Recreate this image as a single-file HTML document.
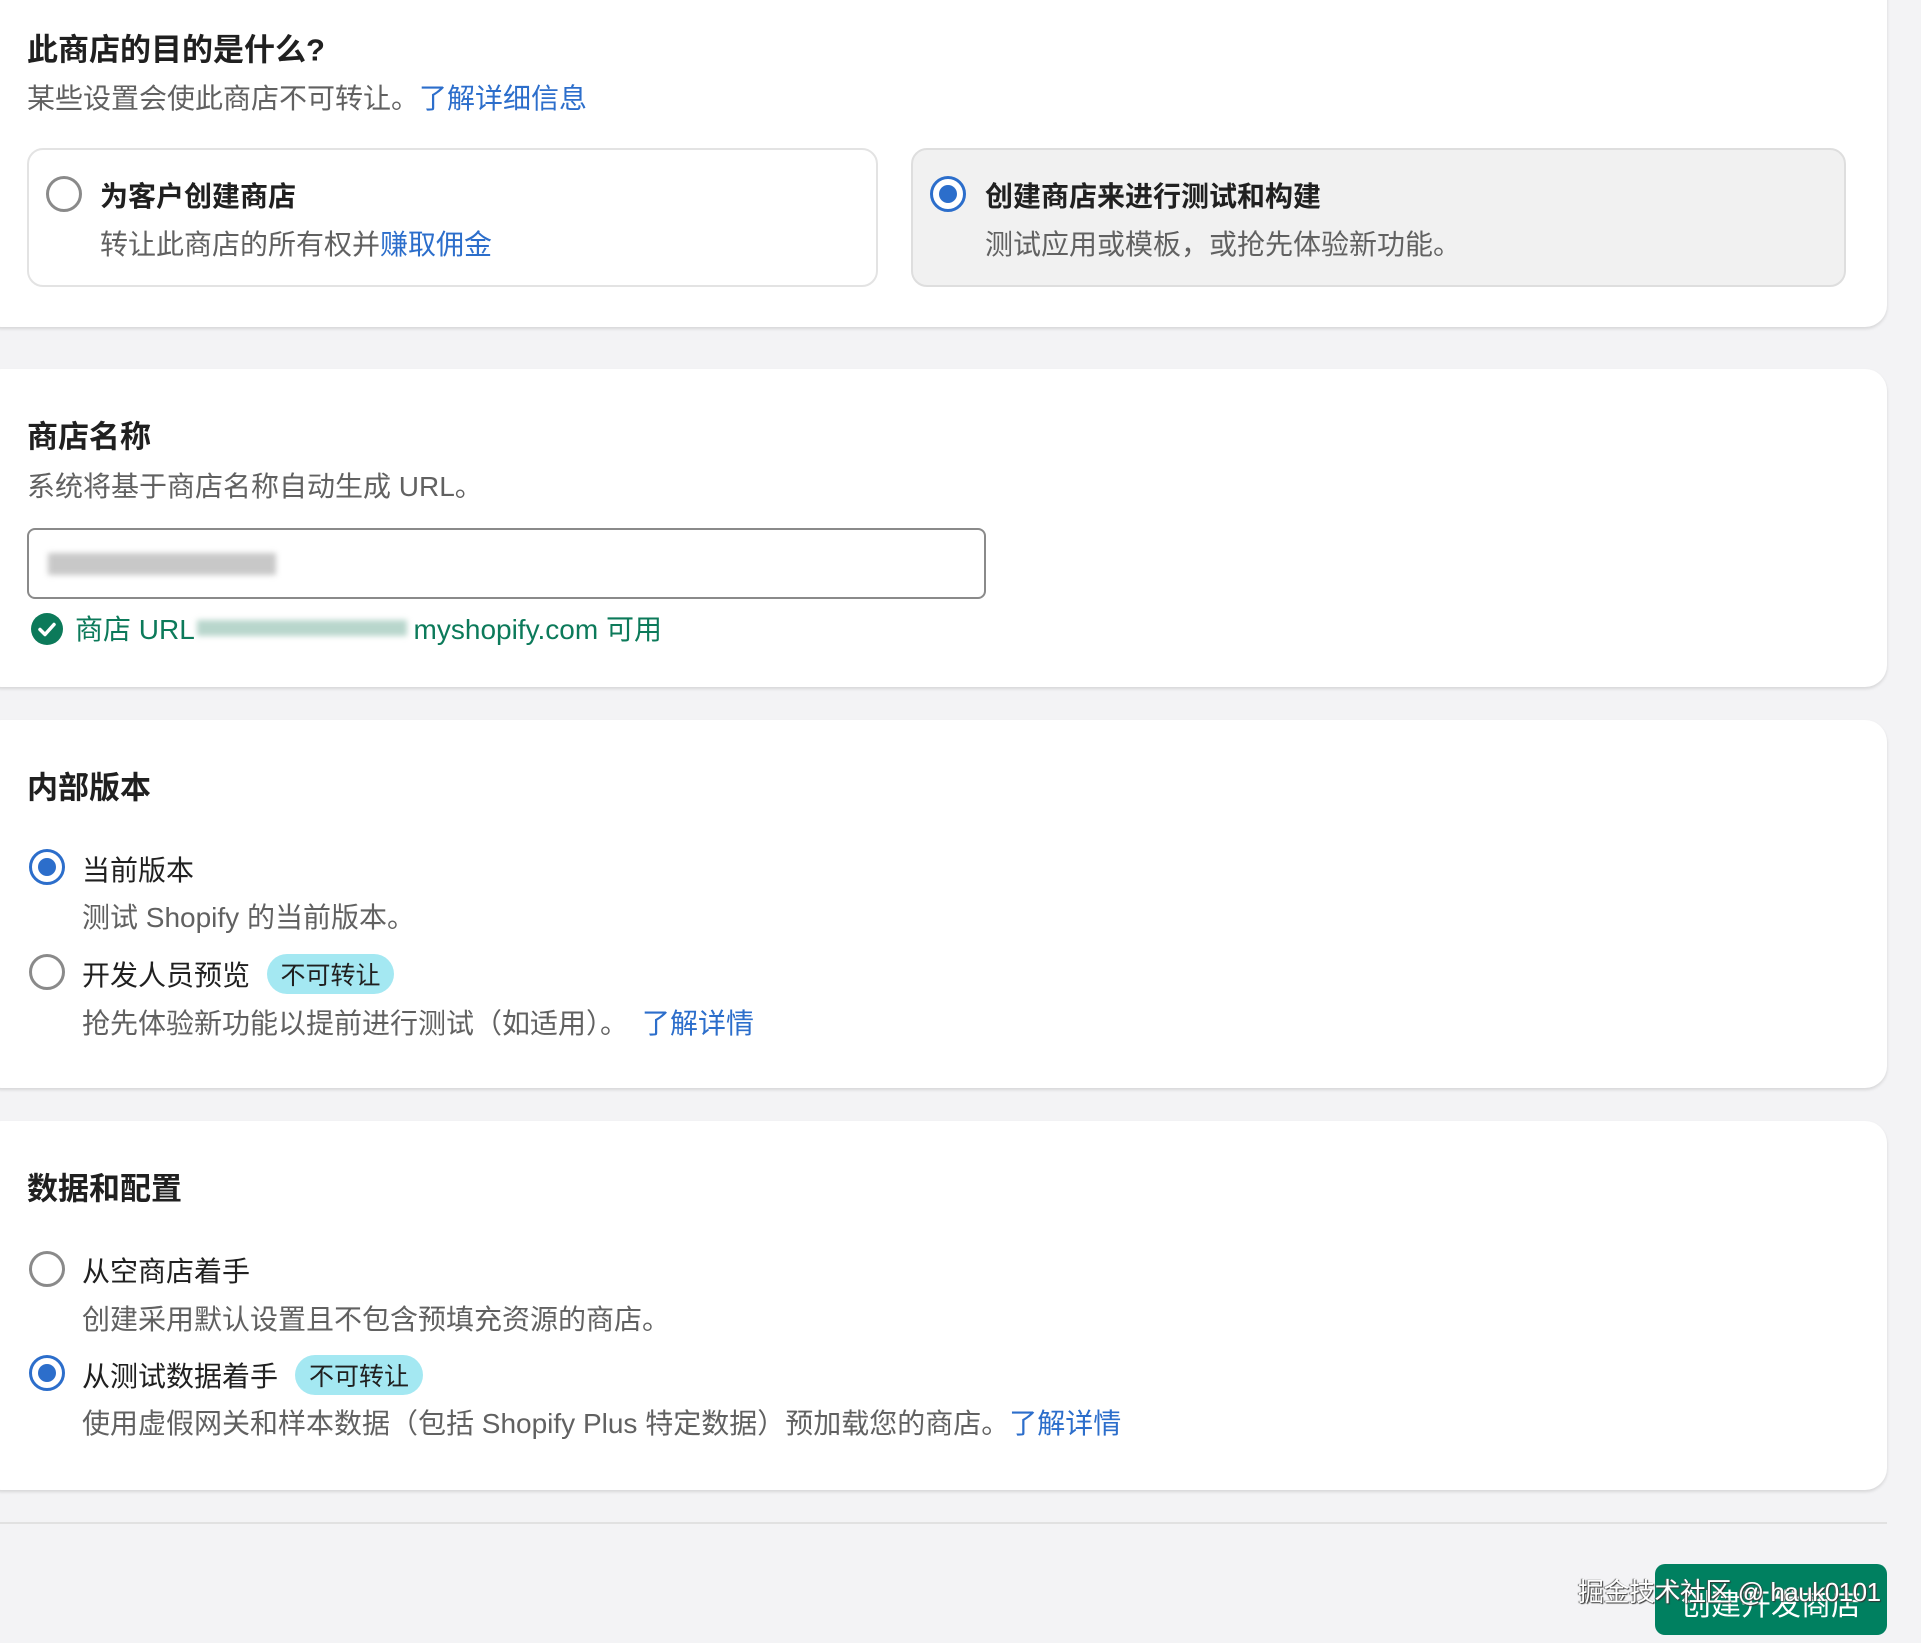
<!DOCTYPE html>
<html><head><meta charset="utf-8"><style>
*{margin:0;padding:0;box-sizing:border-box}
body{width:1921px;height:1643px;background:#f3f3f5;font-family:"Liberation Sans","Noto Sans CJK SC",sans-serif;position:relative;overflow:hidden;color:#303030}
.card{position:absolute;left:-20px;width:1907px;background:#fff;border-radius:22px;box-shadow:0 2px 3px rgba(0,0,0,.12)}
.a{position:absolute;white-space:nowrap}
.h{font-size:31px;font-weight:bold;color:#202020;transform:translateY(-50%)}
.d{font-size:28px;color:#616161;transform:translateY(-50%)}
.l{font-size:28px;color:#202020;transform:translateY(-50%)}
.b{color:#2c6ecb}
.r{position:absolute;width:36px;height:36px;border-radius:50%;border:3px solid #8a8a8a;transform:translate(-50%,-50%);background:#fff}
.r.on{border-color:#2c6ecb}
.r.on::after{content:"";position:absolute;left:6px;top:6px;width:18px;height:18px;border-radius:50%;background:#2c6ecb}
.badge{position:absolute;background:#a4e8f2;border-radius:20px;font-size:25px;color:#202020;display:flex;align-items:center;justify-content:center}
.blur{position:absolute;background:#bbb;filter:blur(3px)}
</style></head><body>
<div class="card" style="top:-30px;height:357px"></div>
<div class="a h" style="left:27px;top:47px">此商店的目的是什么?</div>
<div class="a d" style="left:27px;top:97px">某些设置会使此商店不可转让。<span class="b">了解详细信息</span></div>
<div class="a" style="left:27px;top:148px;width:851px;height:139px;border:2px solid #e3e3e3;border-radius:16px"></div>
<div class="r" style="left:64px;top:194px"></div>
<div class="a l" style="left:100px;top:195px;font-weight:bold">为客户创建商店</div>
<div class="a d" style="left:100px;top:243px">转让此商店的所有权并<span class="b">赚取佣金</span></div>
<div class="a" style="left:911px;top:148px;width:935px;height:139px;border:2px solid #dedede;border-radius:16px;background:#f1f1f1"></div>
<div class="r on" style="left:948px;top:194px"></div>
<div class="a l" style="left:985px;top:195px;font-weight:bold">创建商店来进行测试和构建</div>
<div class="a d" style="left:985px;top:243px">测试应用或模板，或抢先体验新功能。</div>

<div class="card" style="top:369px;height:318px"></div>
<div class="a h" style="left:27px;top:434px">商店名称</div>
<div class="a d" style="left:27px;top:485px">系统将基于商店名称自动生成 URL。</div>
<div class="a" style="left:27px;top:528px;width:959px;height:71px;border:2px solid #8a8a8a;border-radius:8px"></div>
<div class="blur" style="left:48px;top:553px;width:228px;height:22px;background:#c8c8c8"></div>
<svg class="a" style="left:30px;top:612px" width="34" height="34" viewBox="0 0 34 34"><circle cx="17" cy="17" r="16" fill="#0c7a5a"/><path d="M10 17.5l5 5 9-10" stroke="#fff" stroke-width="3.5" fill="none" stroke-linecap="round" stroke-linejoin="round"/></svg>
<div class="a d" style="left:75px;top:628px;color:#0c7a5a">商店 URL <span style="display:inline-block;width:212px"></span>myshopify.com 可用</div>
<div class="blur" style="left:197px;top:620px;width:210px;height:16px;background:#b8d6cc"></div>

<div class="card" style="top:720px;height:368px"></div>
<div class="a h" style="left:27px;top:785px">内部版本</div>
<div class="r on" style="left:47px;top:867px"></div>
<div class="a l" style="left:82px;top:869px">当前版本</div>
<div class="a d" style="left:82px;top:916px">测试 Shopify 的当前版本。</div>
<div class="r" style="left:47px;top:972px"></div>
<div class="a l" style="left:82px;top:974px">开发人员预览</div>
<div class="badge" style="left:267px;top:954px;width:127px;height:40px">不可转让</div>
<div class="a d" style="left:82px;top:1022px">抢先体验新功能以提前进行测试（如适用）。<span class="b" style="margin-left:14px">了解详情</span></div>

<div class="card" style="top:1121px;height:369px"></div>
<div class="a h" style="left:27px;top:1186px">数据和配置</div>
<div class="r" style="left:47px;top:1269px"></div>
<div class="a l" style="left:82px;top:1270px">从空商店着手</div>
<div class="a d" style="left:82px;top:1318px">创建采用默认设置且不包含预填充资源的商店。</div>
<div class="r on" style="left:47px;top:1373px"></div>
<div class="a l" style="left:82px;top:1375px">从测试数据着手</div>
<div class="badge" style="left:295px;top:1355px;width:128px;height:40px">不可转让</div>
<div class="a d" style="left:82px;top:1422px">使用虚假网关和样本数据（包括 Shopify Plus 特定数据）预加载您的商店。<span class="b">了解详情</span></div>

<div class="a" style="left:0;top:1522px;width:1887px;height:2px;background:#e1e1e1"></div>
<div class="a" style="left:1655px;top:1564px;width:232px;height:71px;background:#008060;border-radius:10px;color:#fff;font-size:30px;display:flex;align-items:center;justify-content:center;padding-top:4px">创建开发商店</div>
<div class="a" style="left:1578px;top:1572px;font-size:26px;color:#fff;text-shadow:1px 1px 1px #333,-1px 0 1px #555;letter-spacing:-0.5px">掘金技术社区 @ hauk0101</div>
</body></html>
